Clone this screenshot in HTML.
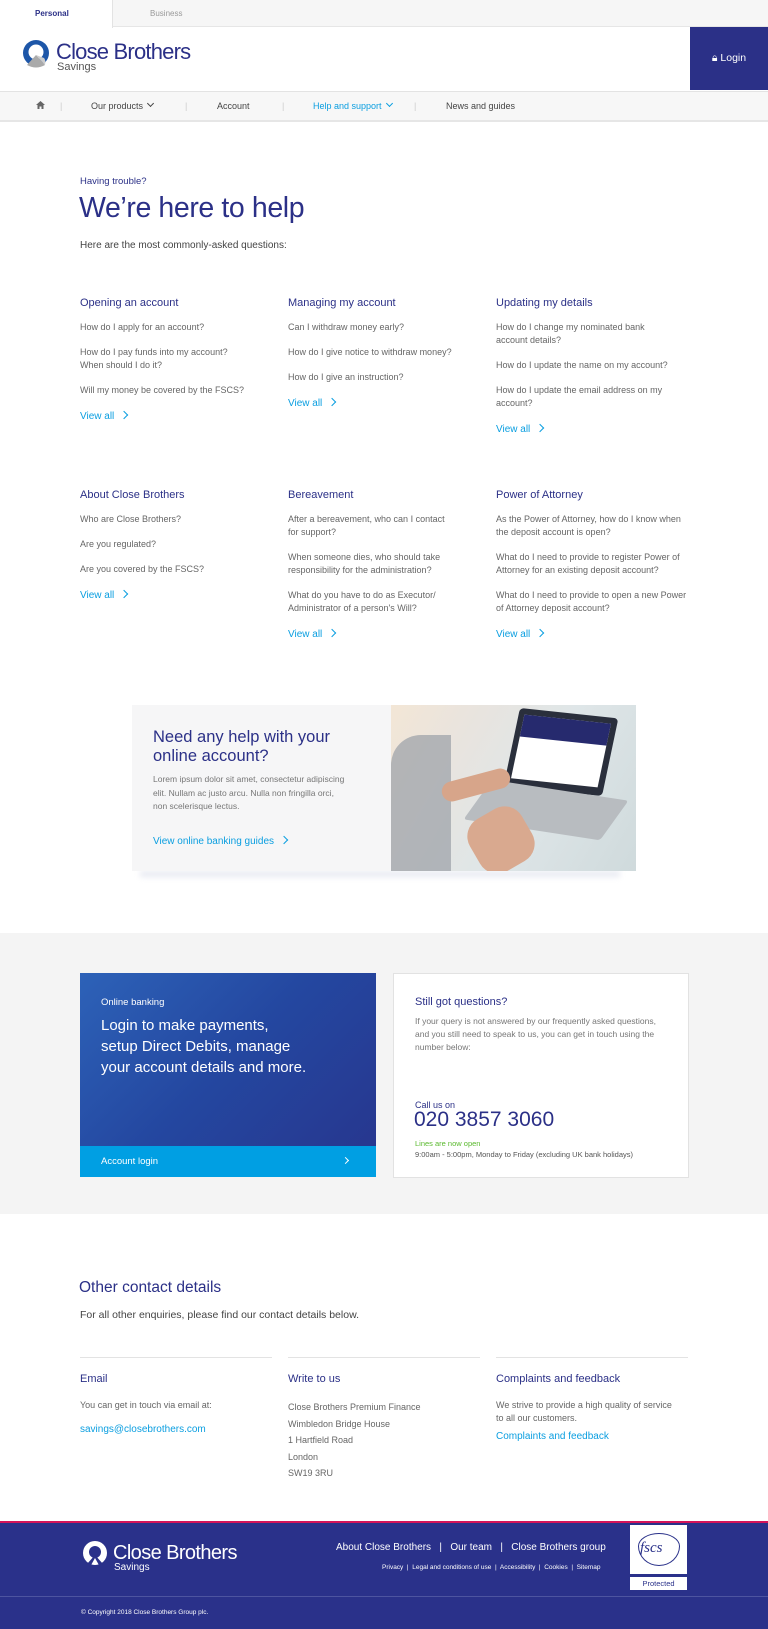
<!DOCTYPE html>
<html><head><meta charset="utf-8"><style>
*{margin:0;padding:0;box-sizing:border-box}
body{width:768px;height:1629px;position:relative;font-family:"Liberation Sans",sans-serif;background:#fff;overflow:hidden;color:#555}
.a{position:absolute;white-space:nowrap}
.navy{color:#2b3087}.blue{color:#0a9ee0}
.q{font-size:9px;line-height:13px;color:#666}
.h{font-size:11px;color:#2b3087}
.va{font-size:10px;color:#0a9ee0}
.lk{font-size:10px;color:#0a9ee0}
.va:after{content:"";display:inline-block;width:5px;height:5px;border-right:1.2px solid #0a9ee0;border-top:1.2px solid #0a9ee0;transform:rotate(45deg);margin-left:7px;vertical-align:1px}
.dn{display:inline-block;width:5px;height:5px;border-right:1px solid currentColor;border-bottom:1px solid currentColor;transform:rotate(45deg);margin-left:5px;vertical-align:3px}
</style></head><body>
<!-- top tabs -->
<div class="a" style="left:0;top:0;width:768px;height:27px;background:#f6f6f6;border-bottom:1px solid #e6e6e6"></div>
<div class="a" style="left:0;top:0;width:113px;height:28px;background:#fff;border-right:1px solid #e3e3e3"></div>
<div class="a" style="left:35px;top:9px;font-size:8px;font-weight:bold;color:#2b3087">Personal</div>
<div class="a" style="left:150px;top:9px;font-size:8px;color:#999">Business</div>
<!-- header -->
<svg class="a" style="left:22px;top:38px" width="30" height="34" viewBox="0 0 30 34"><circle cx="14" cy="15" r="13" fill="#1d56a8"/><circle cx="14" cy="14" r="7.5" fill="#fff"/><path d="M14 17 L5 27 Q14 32 23 27 Z" fill="#aaa"/><path d="M14 17 L23 27 Q24 22 22 20Z" fill="#ccc"/></svg>
<div class="a" style="left:56px;top:39px;font-size:22px;color:#2b3087;letter-spacing:-0.8px">Close Brothers</div>
<div class="a" style="left:57px;top:61px;font-size:11px;color:#555">Savings</div>
<div class="a" style="left:690px;top:27px;width:78px;height:63px;background:#2b3087;color:#fff;font-size:10.5px;text-align:center;line-height:63px">&#128274;&#xFE0E; Login</div>
<!-- nav -->
<div class="a" style="left:0;top:91px;width:768px;height:31px;background:#f7f7f7;border-top:1px solid #e3e3e3;border-bottom:2px solid #e6e6e6"></div>
<svg class="a" style="left:36px;top:101px" width="9" height="8" viewBox="0 0 9 8"><path d="M4.5 0 L9 4 H7.5 V8 H5.5 V5.5 H3.5 V8 H1.5 V4 H0Z" fill="#666"/></svg>
<div class="a" style="left:0;top:101px;font-size:9px;color:#444;width:768px">
<span class="a" style="left:60px;color:#ccc">|</span>
<span class="a" style="left:91px">Our products<i class="dn"></i></span>
<span class="a" style="left:185px;color:#ccc">|</span>
<span class="a" style="left:217px">Account</span>
<span class="a" style="left:282px;color:#ccc">|</span>
<span class="a" style="left:313px;color:#0a9ee0">Help and support<i class="dn"></i></span>
<span class="a" style="left:414px;color:#ccc">|</span>
<span class="a" style="left:446px">News and guides</span></div>
<!-- hero -->
<div class="a navy" style="left:80px;top:176px;font-size:9.5px">Having trouble?</div>
<div class="a navy" style="left:79px;top:192px;font-size:28.5px;letter-spacing:-0.4px">We’re here to help</div>
<div class="a" style="left:80px;top:240px;font-size:10px;color:#444">Here are the most commonly-asked questions:</div>
<!-- FAQ row 1 -->
<div class="a" style="left:80px;top:297px;width:190px"><div class="h">Opening an account</div>
<div class="q" style="margin-top:12px">How do I apply for an account?</div>
<div class="q" style="margin-top:12px">How do I pay funds into my account?<br>When should I do it?</div>
<div class="q" style="margin-top:12px">Will my money be covered by the FSCS?</div>
<div class="va" style="margin-top:14px">View all</div></div>
<div class="a" style="left:288px;top:297px;width:190px"><div class="h">Managing my account</div>
<div class="q" style="margin-top:12px">Can I withdraw money early?</div>
<div class="q" style="margin-top:12px">How do I give notice to withdraw money?</div>
<div class="q" style="margin-top:12px">How do I give an instruction?</div>
<div class="va" style="margin-top:14px">View all</div></div>
<div class="a" style="left:496px;top:297px;width:190px"><div class="h">Updating my details</div>
<div class="q" style="margin-top:12px">How do I change my nominated bank<br>account details?</div>
<div class="q" style="margin-top:12px">How do I update the name on my account?</div>
<div class="q" style="margin-top:12px">How do I update the email address on my<br>account?</div>
<div class="va" style="margin-top:14px">View all</div></div>
<!-- FAQ row 2 -->
<div class="a" style="left:80px;top:489px;width:190px"><div class="h">About Close Brothers</div>
<div class="q" style="margin-top:12px">Who are Close Brothers?</div>
<div class="q" style="margin-top:12px">Are you regulated?</div>
<div class="q" style="margin-top:12px">Are you covered by the FSCS?</div>
<div class="va" style="margin-top:14px">View all</div></div>
<div class="a" style="left:288px;top:489px;width:190px"><div class="h">Bereavement</div>
<div class="q" style="margin-top:12px">After a bereavement, who can I contact<br>for support?</div>
<div class="q" style="margin-top:12px">When someone dies, who should take<br>responsibility for the administration?</div>
<div class="q" style="margin-top:12px">What do you have to do as Executor/<br>Administrator of a person's Will?</div>
<div class="va" style="margin-top:14px">View all</div></div>
<div class="a" style="left:496px;top:489px;width:200px"><div class="h">Power of Attorney</div>
<div class="q" style="margin-top:12px">As the Power of Attorney, how do I know when<br>the deposit account is open?</div>
<div class="q" style="margin-top:12px">What do I need to provide to register Power of<br>Attorney for an existing deposit account?</div>
<div class="q" style="margin-top:12px">What do I need to provide to open a new Power<br>of Attorney deposit account?</div>
<div class="va" style="margin-top:14px">View all</div></div>
<!-- banner -->
<div class="a" style="left:140px;top:871px;width:480px;height:6px;background:#e8eaf2;filter:blur(3px)"></div>
<div class="a" style="left:132px;top:705px;width:504px;height:166px;background:#f6f6f7"></div>
<div class="a navy" style="left:153px;top:728px;font-size:16.5px;line-height:19px;white-space:normal;width:200px">Need any help with your online account?</div>
<div class="a" style="left:153px;top:773px;font-size:8.5px;line-height:13.5px;color:#777">Lorem ipsum dolor sit amet, consectetur adipiscing<br>elit. Nullam ac justo arcu. Nulla non fringilla orci,<br>non scelerisque lectus.</div>
<div class="a va" style="left:153px;top:836px">View online banking guides</div>
<div class="a" style="left:391px;top:705px;width:245px;height:166px;background:linear-gradient(120deg,#f3e6d6 0%,#e9e4de 25%,#dfe6e8 55%,#cfdadc 100%);overflow:hidden">
<div class="a" style="left:0;top:30px;width:60px;height:140px;background:#9aa0a6;border-radius:30px 0 0 0;opacity:.7"></div>
<div class="a" style="left:120px;top:8px;width:100px;height:78px;background:#2a2f3c;transform:skewX(-6deg) rotate(6deg);border-radius:4px"></div>
<div class="a" style="left:126px;top:14px;width:88px;height:64px;background:#fff;transform:skewX(-6deg) rotate(6deg)"><div style="height:22px;background:#262a6e"></div></div>
<div class="a" style="left:80px;top:85px;width:150px;height:40px;background:#b8bcc0;transform:skewX(-30deg) rotate(8deg);border-radius:3px"></div>
<div class="a" style="left:50px;top:70px;width:70px;height:20px;background:#d7a58a;border-radius:10px;transform:rotate(-15deg)"></div>
<div class="a" style="left:80px;top:105px;width:60px;height:60px;background:#d9a98f;border-radius:20px;transform:rotate(-30deg)"></div>
</div>
<!-- gray section -->
<div class="a" style="left:0;top:933px;width:768px;height:281px;background:#f4f4f4"></div>
<div class="a" style="left:80px;top:973px;width:296px;height:174px;background:linear-gradient(135deg,#2d62b8 0%,#2447a0 50%,#27378f 100%)"></div>
<div class="a" style="left:80px;top:1146px;width:296px;height:31px;background:#009fe3"></div>
<div class="a" style="left:101px;top:997px;font-size:9.5px;color:#fff">Online banking</div>
<div class="a" style="left:101px;top:1015px;font-size:15px;line-height:21px;color:#fff">Login to make payments,<br>setup Direct Debits, manage<br>your account details and more.</div>
<div class="a" style="left:101px;top:1156px;font-size:9.5px;color:#fff">Account login</div>
<div class="a" style="left:343px;top:1158px;width:5px;height:5px;border-right:1.3px solid #fff;border-top:1.3px solid #fff;transform:rotate(45deg)"></div>
<div class="a" style="left:393px;top:973px;width:296px;height:205px;background:#fff;border:1px solid #e2e2e2"></div>
<div class="a navy" style="left:415px;top:996px;font-size:11px">Still got questions?</div>
<div class="a" style="left:415px;top:1015px;font-size:8.5px;line-height:13px;color:#777">If your query is not answered by our frequently asked questions,<br>and you still need to speak to us, you can get in touch using the<br>number below:</div>
<div class="a navy" style="left:415px;top:1100px;font-size:9px">Call us on</div>
<div class="a navy" style="left:414px;top:1108px;font-size:21px">020 3857 3060</div>
<div class="a" style="left:415px;top:1139px;font-size:7.5px;color:#5ab92e">Lines are now open</div>
<div class="a" style="left:415px;top:1150px;font-size:7.5px;color:#555">9:00am - 5:00pm, Monday to Friday (excluding UK bank holidays)</div>
<!-- other contact -->
<div class="a navy" style="left:79px;top:1279px;font-size:15.5px">Other contact details</div>
<div class="a" style="left:80px;top:1309px;font-size:10.5px;color:#444">For all other enquiries, please find our contact details below.</div>
<div class="a" style="left:80px;top:1357px;width:192px;border-top:1px solid #e3e3e3"></div>
<div class="a" style="left:288px;top:1357px;width:192px;border-top:1px solid #e3e3e3"></div>
<div class="a" style="left:496px;top:1357px;width:192px;border-top:1px solid #e3e3e3"></div>
<div class="a h" style="left:80px;top:1373px">Email</div>
<div class="a h" style="left:288px;top:1373px">Write to us</div>
<div class="a h" style="left:496px;top:1373px">Complaints and feedback</div>
<div class="a q" style="left:80px;top:1399px">You can get in touch via email at:</div>
<div class="a lk" style="left:80px;top:1424px">savings@closebrothers.com</div>
<div class="a q" style="left:288px;top:1399px;line-height:16.5px">Close Brothers Premium Finance<br>Wimbledon Bridge House<br>1 Hartfield Road<br>London<br>SW19 3RU</div>
<div class="a q" style="left:496px;top:1399px">We strive to provide a high quality of service<br>to all our customers.</div>
<div class="a lk" style="left:496px;top:1431px">Complaints and feedback</div>
<!-- footer -->
<div class="a" style="left:0;top:1521px;width:768px;height:108px;background:#2a318a;border-top:2px solid #d4145a"></div>
<svg class="a" style="left:82px;top:1540px" width="26" height="30" viewBox="0 0 26 30"><circle cx="13" cy="13" r="12" fill="#fff"/><circle cx="13" cy="12" r="6" fill="#2a318a"/><path d="M13 15 L5 24 L8 27 L13 18 L18 27 L21 24Z" fill="#2a318a"/></svg>
<div class="a" style="left:113px;top:1542px;font-size:20px;color:#fff;letter-spacing:-0.6px">Close Brothers</div>
<div class="a" style="left:114px;top:1562px;font-size:10px;color:#fff">Savings</div>
<div class="a" style="left:336px;top:1542px;font-size:10px;color:#fff">About Close Brothers &nbsp;&nbsp;|&nbsp;&nbsp; Our team &nbsp;&nbsp;|&nbsp;&nbsp; Close Brothers group</div>
<div class="a" style="left:382px;top:1564px;font-size:6.5px;color:#fff">Privacy &nbsp;|&nbsp; Legal and conditions of use &nbsp;|&nbsp; Accessibility &nbsp;|&nbsp; Cookies &nbsp;|&nbsp; Sitemap</div>
<div class="a" style="left:630px;top:1525px;width:57px;height:49px;background:#fff"></div>
<div class="a" style="left:638px;top:1533px;width:42px;height:33px;border:1.5px solid #2a318a;border-radius:50% 50% 50% 50%/40% 40% 60% 60%"></div>
<div class="a" style="left:640px;top:1540px;font-size:15px;font-style:italic;color:#2a318a;font-family:'Liberation Serif',serif">fscs</div>
<div class="a" style="left:630px;top:1577px;width:57px;height:13px;background:#fff;font-size:7.5px;color:#2a318a;text-align:center;line-height:13px">Protected</div>
<div class="a" style="left:0;top:1596px;width:768px;border-top:1px solid #4d54a0"></div>
<div class="a" style="left:81px;top:1609px;font-size:6.5px;color:#fff">© Copyright 2018 Close Brothers Group plc.</div>
</body></html>
